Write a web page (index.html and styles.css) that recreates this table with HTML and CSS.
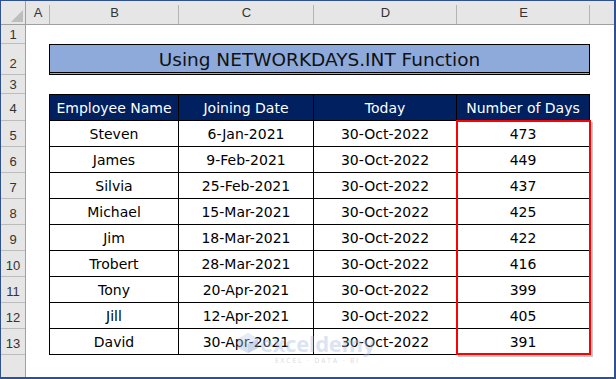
FILE: index.html
```html
<!DOCTYPE html>
<html>
<head>
    <title>NETWORKDAYS.INT</title>
    <meta charset="utf-8">
    <link rel="stylesheet" href="styles.css">
</head>
<body>
    <div class="frame">
        <div class="colheads">
            <div class="corner">
                <svg width="12" height="12" viewBox="0 0 12 12"><polygon points="12,0 12,12 0,12" fill="#bdbdbd"/></svg>
            </div>
            <div class="colhead col-a">A</div>
            <div class="colhead col-b">B</div>
            <div class="colhead col-c">C</div>
            <div class="colhead col-d">D</div>
            <div class="colhead col-e">E</div>
            <div class="colhead col-f"></div>
        </div>

        <div class="body">
            <div class="rowheads">
                <div class="rowhead r-short">1</div>
                <div class="rowhead r-title">2</div>
                <div class="rowhead r-short">3</div>
                <div class="rowhead r-head">4</div>
                <div class="rowhead">5</div>
                <div class="rowhead">6</div>
                <div class="rowhead">7</div>
                <div class="rowhead">8</div>
                <div class="rowhead">9</div>
                <div class="rowhead">10</div>
                <div class="rowhead">11</div>
                <div class="rowhead">12</div>
                <div class="rowhead">13</div>
                <div class="rowhead r-last"></div>
            </div>

            <div class="sheet">
                <div class="title">Using NETWORKDAYS.INT Function</div>

                <div class="table">
                    <div class="th">Employee Name</div>
                    <div class="th">Joining Date</div>
                    <div class="th">Today</div>
                    <div class="th">Number of Days</div>

                    <div class="td">Steven</div><div class="td">6-Jan-2021</div><div class="td">30-Oct-2022</div><div class="td">473</div>
                    <div class="td">James</div><div class="td">9-Feb-2021</div><div class="td">30-Oct-2022</div><div class="td">449</div>
                    <div class="td">Silvia</div><div class="td">25-Feb-2021</div><div class="td">30-Oct-2022</div><div class="td">437</div>
                    <div class="td">Michael</div><div class="td">15-Mar-2021</div><div class="td">30-Oct-2022</div><div class="td">425</div>
                    <div class="td">Jim</div><div class="td">18-Mar-2021</div><div class="td">30-Oct-2022</div><div class="td">422</div>
                    <div class="td">Trobert</div><div class="td">28-Mar-2021</div><div class="td">30-Oct-2022</div><div class="td">416</div>
                    <div class="td">Tony</div><div class="td">20-Apr-2021</div><div class="td">30-Oct-2022</div><div class="td">399</div>
                    <div class="td">Jill</div><div class="td">12-Apr-2021</div><div class="td">30-Oct-2022</div><div class="td">405</div>
                    <div class="td">David</div><div class="td">30-Apr-2021</div><div class="td">30-Oct-2022</div><div class="td">391</div>
                </div>

                <div class="highlight"></div>

                <div class="watermark">
                    <svg class="wm-logo" width="22" height="22" viewBox="0 0 22 22">
                        <polygon points="11,1 21,7 21,16 11,21 1,16 1,7" fill="#9fb6dc"/>
                        <polygon points="11,1 21,7 11,12 1,7" fill="#c3d2ec"/>
                        <polygon points="11,12 21,7 21,16 11,21" fill="#7f9bcc"/>
                    </svg>
                    <div class="wm-text">
                        <div class="wm-name">exceldemy</div>
                        <div class="wm-sub">EXCEL · DATA · BI</div>
                    </div>
                </div>
            </div>
        </div>
    </div>
</body>
</html>
```

FILE: styles.css
```css
body {
    margin: 0;
    background: #fff;
}
.frame {
    width: 616px;
    height: 379px;
    box-sizing: border-box;
    border-style: solid;
    border-color: #2f528f;
    border-width: 1px 2px 2px 1px;
    background: #fff;
    overflow: hidden;
}

/* column letters */
.colheads {
    display: flex;
    height: 24px;
    box-sizing: border-box;
    background: #e6e6e6;
    border-bottom: 1px solid #9f9f9f;
    font-family: "Liberation Sans", Arial, sans-serif;
    font-size: 13px;
    color: #333;
}
.corner {
    width: 25px;
    flex: none;
    box-sizing: border-box;
    border-right: 1px solid #9f9f9f;
    display: flex;
    align-items: flex-end;
    justify-content: flex-end;
    padding: 0 2px 2px 0;
}
.colhead {
    position: relative;
    flex: none;
    display: flex;
    align-items: center;
    justify-content: center;
}
.colhead::after {
    content: "";
    position: absolute;
    right: 0;
    top: 4px;
    bottom: 0;
    width: 1px;
    background: #b4b4b4;
}
.col-a { width: 24px; }
.col-b { width: 129px; }
.col-c { width: 135px; }
.col-d { width: 143px; }
.col-e { width: 133px; }
.col-f { width: 24px; }
.col-f::after { display: none; }

.body {
    display: flex;
}

/* row numbers */
.rowheads {
    width: 25px;
    flex: none;
    box-sizing: border-box;
    background: #e6e6e6;
    border-right: 1px solid #9f9f9f;
    font-family: "Liberation Sans", Arial, sans-serif;
    font-size: 13px;
    color: #333;
}
.rowhead {
    height: 26px;
    box-sizing: border-box;
    border-bottom: 1px solid #bcbcbc;
    display: flex;
    align-items: flex-end;
    justify-content: center;
    padding-bottom: 3px;
}
.r-short { height: 19px; padding-bottom: 1px; }
.r-title { height: 31px; padding-bottom: 3px; }
.r-head { height: 27px; padding-bottom: 4px; }
.r-last { height: 22px; border-bottom: none; }

/* worksheet area */
.sheet {
    position: relative;
    display: grid;
    grid-template-columns: 23px 541px 24px;
    grid-template-rows: 19px 31px 19px 261px 22px;
    font-family: "DejaVu Sans", "Liberation Sans", sans-serif;
}
.title {
    grid-row: 2;
    grid-column: 2;
    box-sizing: border-box;
    background: #8eaadb;
    border: 1px solid #000;
    border-bottom: 3px double #000;
    display: flex;
    align-items: center;
    justify-content: center;
    font-size: 18.5px;
    color: #111;
    padding-top: 1px;
}
.table {
    grid-row: 4;
    grid-column: 2;
    display: grid;
    grid-template-columns: 128px 134px 142px 132px;
    grid-auto-rows: 25px;
    gap: 1px;
    padding: 1px;
    background: #000;
    font-size: 14px;
}
.th, .td {
    display: flex;
    align-items: center;
    justify-content: center;
    white-space: nowrap;
}
.th {
    background: #002060;
    color: #fff;
}
.td {
    background: #fff;
    color: #000;
}
.highlight {
    grid-row: 4;
    grid-column: 2;
    justify-self: end;
    align-self: end;
    width: 135px;
    height: 235px;
    margin-right: -1px;
    box-sizing: border-box;
    border: 2px solid #ff0000;
    box-shadow: 2px 2px 0 rgba(0, 0, 0, 0.22);
}
.watermark {
    position: absolute;
    left: 211px;
    top: 307px;
    display: flex;
    align-items: flex-start;
    gap: 1px;
    opacity: 0.4;
    pointer-events: none;
}
.wm-text {
    display: flex;
    flex-direction: column;
    align-items: center;
}
.wm-name {
    font-family: "Open Sans", sans-serif;
    font-weight: 700;
    font-size: 22px;
    line-height: 22px;
    color: #a9bde0;
    letter-spacing: -0.3px;
}
.wm-sub {
    font-family: "Open Sans", sans-serif;
    font-size: 6.5px;
    letter-spacing: 2px;
    color: #9aa3b3;
    margin-top: 2px;
}
```
